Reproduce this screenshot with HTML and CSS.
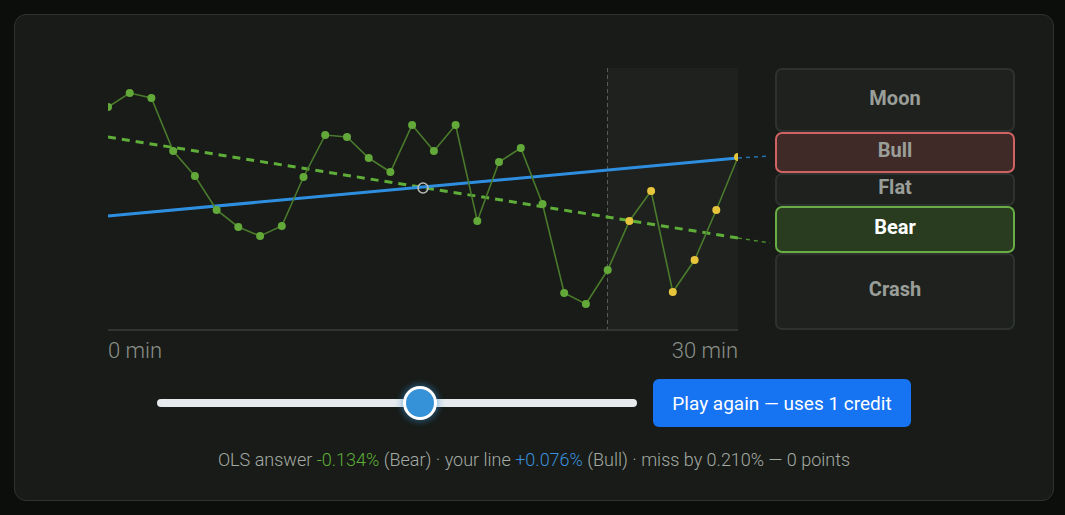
FILE: index.html
```html
<!DOCTYPE html>
<html>
<head>
<meta charset="utf-8">
<link rel="stylesheet" href="styles.css">
</head>
<body>
<div class="card">
  <div class="top">
    <div class="chart-col">
      <svg class="chart" width="630" height="262" viewBox="0 0 630 262">
        <defs>
          <clipPath id="plot"><rect x="0" y="0" width="630" height="262"/></clipPath>
        </defs>
        <rect class="future" x="499" y="0" width="131" height="262"/>
        <line class="now" x1="499.5" y1="0" x2="499.5" y2="262"/>
        <line class="axis" x1="0" y1="262" x2="630" y2="262"/>
        <g clip-path="url(#plot)">
          <line class="ols" x1="0" y1="69" x2="630" y2="170"/>
          <line class="guess" x1="0" y1="148" x2="630" y2="90"/>
          <polyline class="series" points="0,39 21.7,25 43.4,30 65.2,83 86.9,108 108.6,142 130.3,159 152.1,168 173.8,158 195.5,109 217.2,67 239,69 260.7,90 282.4,104 304.1,57 325.9,83 347.6,57 369.3,153 391,94 412.8,80 434.5,136 456.2,225 477.9,236 499.7,202 521.4,153 543.1,123 564.8,224 586.6,192 608.3,142 630,89"/>
          <g class="pt-g">
            <circle cx="0" cy="39" r="4"/><circle cx="21.7" cy="25" r="4"/><circle cx="43.4" cy="30" r="4"/><circle cx="65.2" cy="83" r="4"/><circle cx="86.9" cy="108" r="4"/><circle cx="108.6" cy="142" r="4"/><circle cx="130.3" cy="159" r="4"/><circle cx="152.1" cy="168" r="4"/><circle cx="173.8" cy="158" r="4"/><circle cx="195.5" cy="109" r="4"/><circle cx="217.2" cy="67" r="4"/><circle cx="239" cy="69" r="4"/><circle cx="260.7" cy="90" r="4"/><circle cx="282.4" cy="104" r="4"/><circle cx="304.1" cy="57" r="4"/><circle cx="325.9" cy="83" r="4"/><circle cx="347.6" cy="57" r="4"/><circle cx="369.3" cy="153" r="4"/><circle cx="391" cy="94" r="4"/><circle cx="412.8" cy="80" r="4"/><circle cx="434.5" cy="136" r="4"/><circle cx="456.2" cy="225" r="4"/><circle cx="477.9" cy="236" r="4"/><circle cx="499.7" cy="202" r="4"/>
          </g>
          <g class="pt-y">
            <circle cx="521.4" cy="153" r="4"/><circle cx="543.1" cy="123" r="4"/><circle cx="564.8" cy="224" r="4"/><circle cx="586.6" cy="192" r="4"/><circle cx="608.3" cy="142" r="4"/><circle cx="630" cy="89" r="4"/>
          </g>
        </g>
        <line class="ols-ext" x1="630" y1="170" x2="662" y2="175"/>
        <line class="guess-ext" x1="630" y1="90" x2="662" y2="88"/>
        <circle class="pivot" cx="315" cy="120" r="5"/>
      </svg>
      <div class="axis-labels"><span>0 min</span><span>30 min</span></div>
    </div>
    <div class="buckets">
      <div class="bucket moon">Moon</div>
      <div class="bucket bull">Bull</div>
      <div class="bucket flat">Flat</div>
      <div class="bucket bear">Bear</div>
      <div class="bucket crash">Crash</div>
    </div>
  </div>
  <div class="controls">
    <div class="slider"><div class="thumb"></div></div>
    <button class="play">Play again — uses 1 credit</button>
  </div>
  <p class="result">OLS answer <span class="neg">-0.134%</span> (Bear) · your line <span class="pos">+0.076%</span> (Bull) · miss by 0.210% — 0 points</p>
</div>
</body>
</html>
```

FILE: styles.css
```css
html, body {
  margin: 0;
  padding: 0;
  background: #0b0e0b;
  font-family: Roboto, "Open Sans", sans-serif;
}
.card {
  box-sizing: border-box;
  margin: 14px 0 0 14px;
  width: 1040px;
  height: 487px;
  background: #181b17;
  border: 1px solid #2f332e;
  border-radius: 12px;
  padding: 53px 0 0 93px;
}
.top {
  display: flex;
  gap: 37px;
  height: 292px;
}
.chart-col {
  width: 630px;
  display: flex;
  flex-direction: column;
}
.chart {
  display: block;
  overflow: visible;
}
.future { fill: #1e211e; }
.now { stroke: #585c57; stroke-width: 1; stroke-dasharray: 4 3; }
.axis { stroke: #3a3e39; stroke-width: 1.5; }
.series { fill: none; stroke: #4a7a2c; stroke-width: 1.6; }
.pt-g circle { fill: #62a93a; }
.pt-y circle { fill: #e6c53c; }
.ols { stroke: #5fae39; stroke-width: 3; stroke-dasharray: 8 6; }
.guess { stroke: #2e8fe0; stroke-width: 3; }
.ols-ext { stroke: #4b8a2e; stroke-width: 1.5; stroke-dasharray: 4 4; }
.guess-ext { stroke: #256fae; stroke-width: 1.5; stroke-dasharray: 4 4; }
.pivot { fill: none; stroke: #b8bcb7; stroke-width: 1.6; }
.axis-labels {
  display: flex;
  justify-content: space-between;
  margin-top: 8px;
  font-size: 22px;
  font-weight: 300;
  color: #8a8f89;
  line-height: 26px;
}
.buckets {
  width: 240px;
  display: flex;
  flex-direction: column;
}
.bucket {
  box-sizing: border-box;
  border: 2px solid #2e322e;
  border-radius: 7px;
  background: #1e211e;
  display: flex;
  align-items: center;
  justify-content: center;
  font-size: 20px;
  font-weight: 700;
  color: #9a9e99;
  padding-bottom: 5px;
}
.moon { height: 64px; }
.bull { height: 41px; background: #3f2a27; border-color: #cf6262; }
.flat { height: 33px; }
.bear { height: 47px; background: #2a3c20; border-color: #68ad45; color: #ffffff; }
.crash { height: 77px; }
.controls {
  display: flex;
  align-items: center;
  justify-content: center;
  gap: 16px;
  margin-top: 19px;
  padding-right: 93px;
}
.slider {
  position: relative;
  width: 480px;
  height: 8px;
  border-radius: 4px;
  background: #e6eaed;
}
.thumb {
  position: absolute;
  left: 246px;
  top: -13px;
  box-sizing: border-box;
  width: 34px;
  height: 34px;
  border-radius: 50%;
  background: #3592d9;
  border: 3px solid #ffffff;
  box-shadow: 0 0 6px 2px rgba(53, 146, 217, 0.45);
}
.play {
  width: 258px;
  height: 48px;
  border: none;
  border-radius: 6px;
  background: #1673f2;
  color: #ffffff;
  font-family: Roboto, "Open Sans", sans-serif;
  font-size: 19px;
  padding: 0;
}
.result {
  margin: 22px 0 0 0;
  padding-right: 93px;
  text-align: center;
  font-size: 18px;
  font-weight: 300;
  color: #a5aaa4;
}
.neg { color: #5fae39; }
.pos { color: #3a90dc; }
```
